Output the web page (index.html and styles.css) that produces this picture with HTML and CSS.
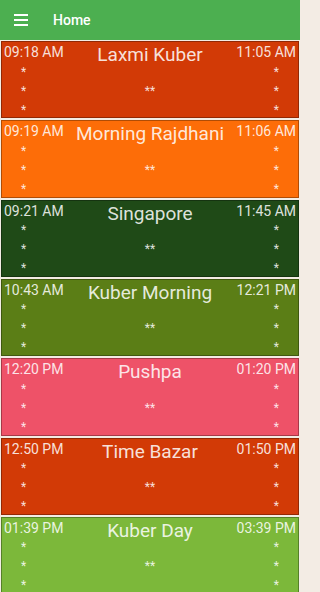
FILE: index.html
```html
<!DOCTYPE html>
<html>
<head>
<meta charset="utf-8">
<link rel="stylesheet" href="styles.css">
</head>
<body>
<header class="bar">
  <svg class="menu" width="14" height="12" viewBox="0 0 14 12"><rect x="0" y="0" width="14" height="2" fill="#fff"/><rect x="0" y="5" width="14" height="2" fill="#fff"/><rect x="0" y="10" width="14" height="2" fill="#fff"/></svg>
  <span class="bar-title">Home</span>
</header>
<main class="list">
  <section class="card red">
    <span class="t-l">09:18 AM</span><span class="title">Laxmi Kuber</span><span class="t-r">11:05 AM</span>
    <span class="s-l r2">*</span><span class="s-r r2">*</span>
    <span class="s-l r3">*</span><span class="s-c r3">**</span><span class="s-r r3">*</span>
    <span class="s-l r4">*</span><span class="s-r r4">*</span>
  </section>
  <section class="card orange">
    <span class="t-l">09:19 AM</span><span class="title">Morning Rajdhani</span><span class="t-r">11:06 AM</span>
    <span class="s-l r2">*</span><span class="s-r r2">*</span>
    <span class="s-l r3">*</span><span class="s-c r3">**</span><span class="s-r r3">*</span>
    <span class="s-l r4">*</span><span class="s-r r4">*</span>
  </section>
  <section class="card dark">
    <span class="t-l">09:21 AM</span><span class="title">Singapore</span><span class="t-r">11:45 AM</span>
    <span class="s-l r2">*</span><span class="s-r r2">*</span>
    <span class="s-l r3">*</span><span class="s-c r3">**</span><span class="s-r r3">*</span>
    <span class="s-l r4">*</span><span class="s-r r4">*</span>
  </section>
  <section class="card olive">
    <span class="t-l">10:43 AM</span><span class="title">Kuber Morning</span><span class="t-r">12:21 PM</span>
    <span class="s-l r2">*</span><span class="s-r r2">*</span>
    <span class="s-l r3">*</span><span class="s-c r3">**</span><span class="s-r r3">*</span>
    <span class="s-l r4">*</span><span class="s-r r4">*</span>
  </section>
  <section class="card pink">
    <span class="t-l">12:20 PM</span><span class="title">Pushpa</span><span class="t-r">01:20 PM</span>
    <span class="s-l r2">*</span><span class="s-r r2">*</span>
    <span class="s-l r3">*</span><span class="s-c r3">**</span><span class="s-r r3">*</span>
    <span class="s-l r4">*</span><span class="s-r r4">*</span>
  </section>
  <section class="card red">
    <span class="t-l">12:50 PM</span><span class="title">Time Bazar</span><span class="t-r">01:50 PM</span>
    <span class="s-l r2">*</span><span class="s-r r2">*</span>
    <span class="s-l r3">*</span><span class="s-c r3">**</span><span class="s-r r3">*</span>
    <span class="s-l r4">*</span><span class="s-r r4">*</span>
  </section>
  <section class="card lime">
    <span class="t-l">01:39 PM</span><span class="title">Kuber Day</span><span class="t-r">03:39 PM</span>
    <span class="s-l r2">*</span><span class="s-r r2">*</span>
    <span class="s-l r3">*</span><span class="s-c r3">**</span><span class="s-r r3">*</span>
    <span class="s-l r4">*</span><span class="s-r r4">*</span>
  </section>
</main>
</body>
</html>
```
FILE: styles.css
```css
html, body {
  margin: 0;
  padding: 0;
  background: #f3ece4;
  font-family: Roboto, "Liberation Sans", sans-serif;
  overflow: hidden;
}
body {
  width: 300px;
  height: 592px;
}
.bar {
  height: 40px;
  background: #4caf50;
  display: flex;
  align-items: center;
  padding-left: 14px;
  box-sizing: border-box;
}
.menu {
  display: block;
}
.bar-title {
  color: #fff;
  font-weight: 500;
  font-size: 14px;
  margin-left: 25px;
}
.list {
  display: flex;
  flex-direction: column;
  gap: 2px;
  padding: 1px 1px 0 1px;
}
.card {
  height: 77.33px;
  flex: none;
  box-sizing: border-box;
  border: 1px solid rgba(0, 0, 0, 0.3);
  display: grid;
  grid-template-columns: 1fr auto 1fr;
  grid-template-rows: 19px repeat(3, 19px);
  padding: 0 2px;
  color: rgba(255, 255, 255, 0.86);
  overflow: hidden;
}
.t-l, .t-r {
  font-size: 14px;
  line-height: 19px;
  padding-top: 1px;
  grid-row: 1;
  white-space: nowrap;
}
.t-l { grid-column: 1; justify-self: start; }
.t-r { grid-column: 3; justify-self: end; }
.title {
  grid-column: 2;
  grid-row: 1 / span 2;
  font-size: 19px;
  line-height: 24px;
  padding-top: 1px;
  white-space: nowrap;
  align-self: start;
}
.s-l, .s-r, .s-c {
  font-size: 12px;
  line-height: 19px;
  padding-top: 1.5px;
}
.s-l { grid-column: 1; justify-self: start; padding-left: 17px; }
.s-c { grid-column: 2; justify-self: center; }
.s-r { grid-column: 3; justify-self: end; padding-right: 17px; }
.r2 { grid-row: 2; }
.r3 { grid-row: 3; }
.r4 { grid-row: 4; }
.red { background: #d23a06; }
.orange { background: #fd6d08; }
.dark { background: #1f4a17; }
.olive { background: #5b7e16; }
.pink { background: #ee5268; }
.lime { background: #7cb83a; }
```
